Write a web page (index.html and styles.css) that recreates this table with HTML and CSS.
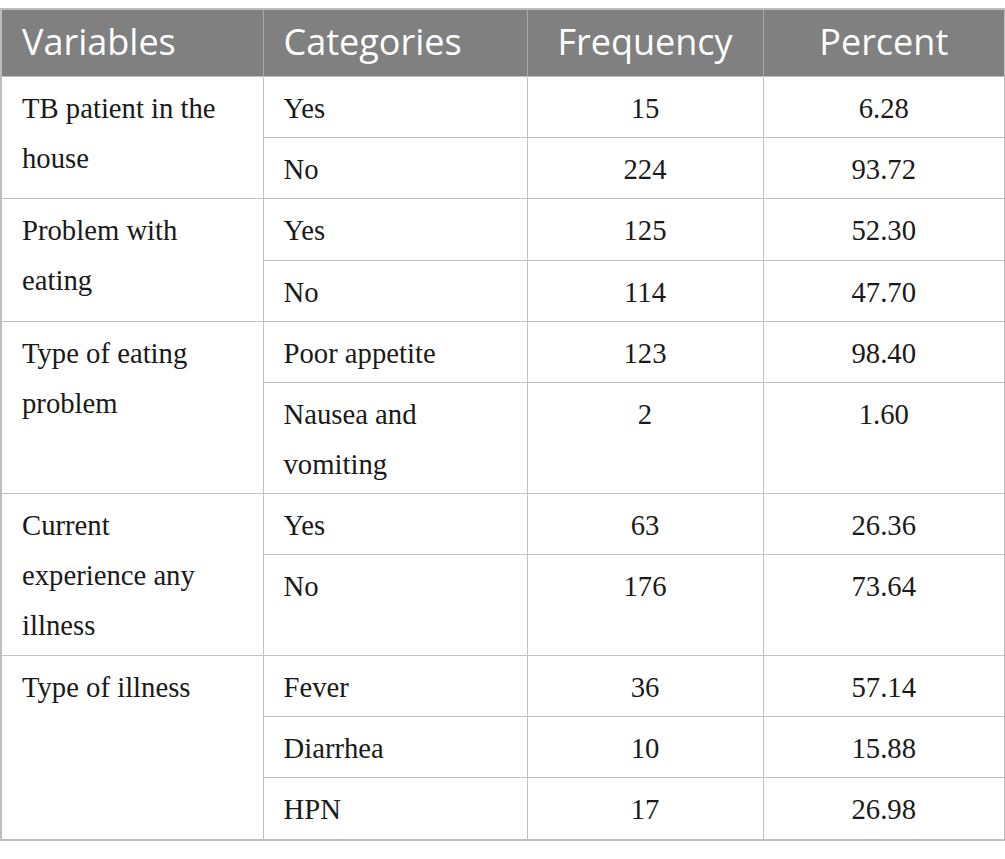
FILE: index.html
```html
<!DOCTYPE html>
<html lang="en">
<head>
<meta charset="utf-8">
<title>Table</title>
<link rel="stylesheet" href="styles.css">
</head>
<body>
<table class="data">
  <colgroup>
    <col class="c1"><col class="c2"><col class="c3"><col class="c4">
  </colgroup>
  <thead>
    <tr><th>Variables</th><th>Categories</th><th class="num">Frequency</th><th class="num">Percent</th></tr>
  </thead>
  <tbody>
    <tr><td class="var" rowspan="2">TB patient in the house</td><td>Yes</td><td class="num">15</td><td class="num">6.28</td></tr>
    <tr><td>No</td><td class="num">224</td><td class="num">93.72</td></tr>
    <tr><td class="var" rowspan="2">Problem with eating</td><td>Yes</td><td class="num">125</td><td class="num">52.30</td></tr>
    <tr><td>No</td><td class="num">114</td><td class="num">47.70</td></tr>
    <tr><td class="var" rowspan="2">Type of eating problem</td><td>Poor appetite</td><td class="num">123</td><td class="num">98.40</td></tr>
    <tr><td>Nausea and vomiting</td><td class="num">2</td><td class="num">1.60</td></tr>
    <tr><td class="var" rowspan="2">Current experience any illness</td><td>Yes</td><td class="num">63</td><td class="num">26.36</td></tr>
    <tr class="tall"><td>No</td><td class="num">176</td><td class="num">73.64</td></tr>
    <tr><td class="var" rowspan="3">Type of illness</td><td>Fever</td><td class="num">36</td><td class="num">57.14</td></tr>
    <tr><td>Diarrhea</td><td class="num">10</td><td class="num">15.88</td></tr>
    <tr><td>HPN</td><td class="num">17</td><td class="num">26.98</td></tr>
  </tbody>
</table>
</body>
</html>
```
FILE: styles.css
```css
html, body {
  margin: 0;
  padding: 0;
  background: #ffffff;
}
body {
  padding-top: 8px;
}
.data {
  border-collapse: collapse;
  width: 1004px;
  table-layout: fixed;
  border: 2px solid #bdbdbd;
}
.c1 { width: 262px; }
.c2 { width: 264px; }
.c3 { width: 236px; }
.c4 { width: 242px; }
.data th {
  background: #7f807f;
  color: #ffffff;
  font-family: "Open Sans", "Noto Sans", sans-serif;
  font-weight: 400;
  font-size: 36px;
  line-height: 40px;
  padding: 12px 20px 14px;
  text-align: left;
  border: 1px solid #a8a8a8;
  border-bottom: 1px solid #bdbdbd;
  white-space: nowrap;
}
.data td {
  font-family: "Liberation Serif", "Times New Roman", serif;
  font-size: 28.7px;
  line-height: 50px;
  color: #1a1a1a;
  padding: 6px 20px 4.2px;
  border: 1px solid #c2c2c2;
  vertical-align: top;
  text-align: left;
}
.data td.var {
  padding-right: 30px;
}
.data tr.tall td {
  height: 89.5px;
}
.data .num {
  text-align: center;
}
```
